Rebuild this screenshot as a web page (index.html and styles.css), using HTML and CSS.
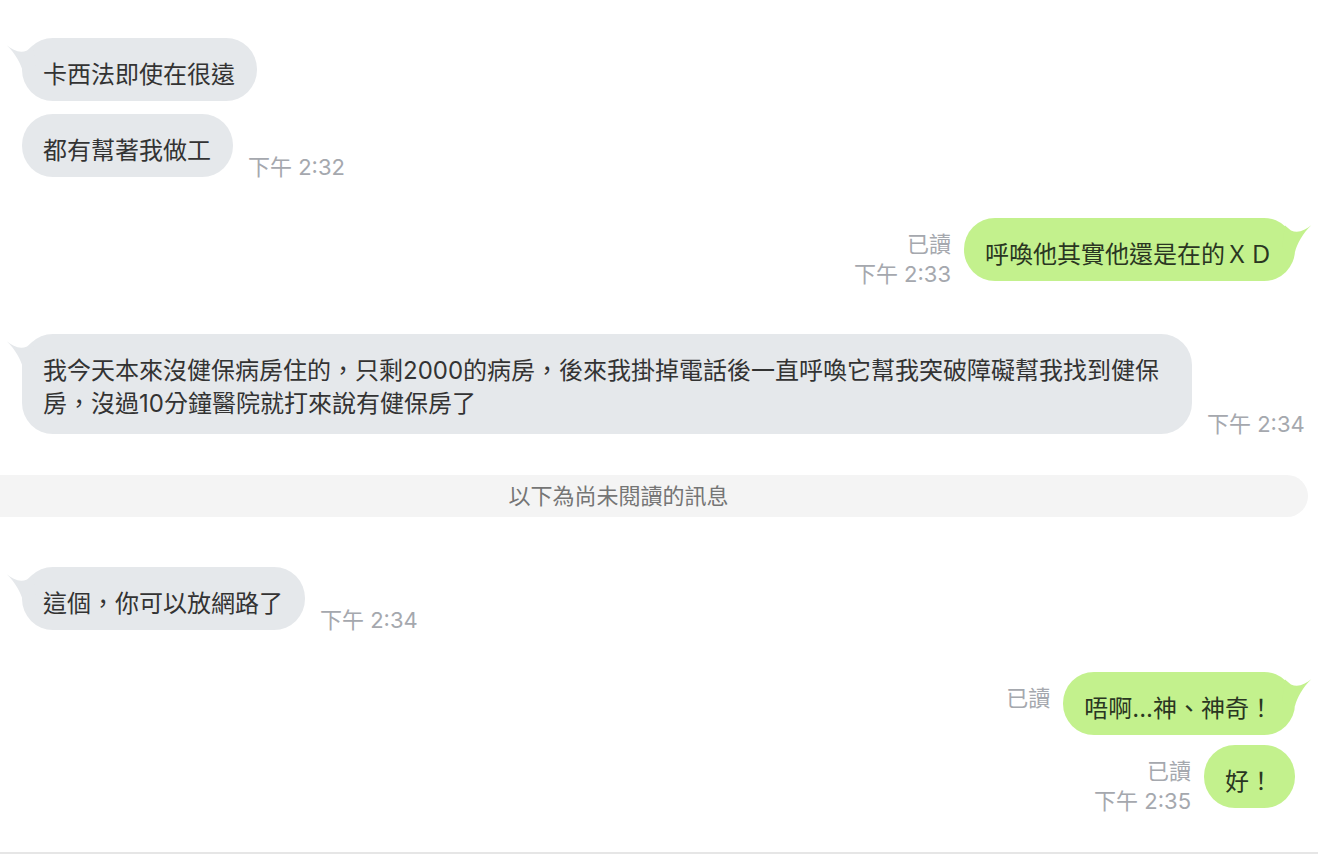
FILE: index.html
```html
<!DOCTYPE html>
<html>
<head>
  <meta charset="UTF-8">
  <title>Chat</title>
  <link rel="stylesheet" href="styles.css">
</head>
<body>
  <main class="chat">
    <!-- incoming group -->
    <div class="row in first">
      <div class="bubble gray">
        <svg class="tail" width="40" height="34" viewBox="0 0 40 34"><path d="M0.7 7.3 C7 12.5 14 15.5 21 12.5 L27 7.5 L30 30 L17 34 C15 26 9 15 0.7 7.3 Z"/></svg>
        卡西法即使在很遠
      </div>
    </div>
    <div class="row in tight">
      <div class="bubble gray">都有幫著我做工</div>
      <div class="meta">下午 2:32</div>
    </div>

    <!-- outgoing -->
    <div class="row out gap-a">
      <div class="meta"><div>已讀</div><div>下午 2:33</div></div>
      <div class="bubble green">
        <svg class="tail" width="40" height="34" viewBox="0 0 40 34"><path d="M0.7 7.3 C7 12.5 14 15.5 21 12.5 L27 7.5 L30 30 L17 34 C15 26 9 15 0.7 7.3 Z"/></svg>
        呼喚他其實他還是在的ＸＤ
      </div>
    </div>

    <div class="row in gap-b">
      <div class="bubble gray long">
        <svg class="tail" width="40" height="34" viewBox="0 0 40 34"><path d="M0.7 7.3 C7 12.5 14 15.5 21 12.5 L27 7.5 L30 30 L17 34 C15 26 9 15 0.7 7.3 Z"/></svg>
        我今天本來沒健保病房住的，只剩2000的病房，後來我掛掉電話後一直呼喚它幫我突破障礙幫我找到健保房，沒過10分鐘醫院就打來說有健保房了
      </div>
      <div class="meta">下午 2:34</div>
    </div>

    <div class="divider">以下為尚未閱讀的訊息</div>

    <div class="row in gap-c">
      <div class="bubble gray">
        <svg class="tail" width="40" height="34" viewBox="0 0 40 34"><path d="M0.7 7.3 C7 12.5 14 15.5 21 12.5 L27 7.5 L30 30 L17 34 C15 26 9 15 0.7 7.3 Z"/></svg>
        這個，你可以放網路了
      </div>
      <div class="meta">下午 2:34</div>
    </div>

    <div class="row out gap-d">
      <div class="meta"><div>已讀</div></div>
      <div class="bubble green">
        <svg class="tail" width="40" height="34" viewBox="0 0 40 34"><path d="M0.7 7.3 C7 12.5 14 15.5 21 12.5 L27 7.5 L30 30 L17 34 C15 26 9 15 0.7 7.3 Z"/></svg>
        唔啊...神、神奇！
      </div>
    </div>
    <div class="row out tight">
      <div class="meta"><div>已讀</div><div>下午 2:35</div></div>
      <div class="bubble green">好！</div>
    </div>
  </main>
  <footer class="composer"></footer>
</body>
</html>
```

FILE: styles.css
```css
html, body {
  height: 100%;
}
body {
  margin: 0;
  display: flex;
  flex-direction: column;
  background: #fff;
  font-family: Inter, "Noto Sans CJK TC", sans-serif;
  overflow: hidden;
}
.chat {
  flex: 1;
  padding-top: 38px;
}
/* message rows */
.row {
  display: flex;
  padding: 0 23px 0 22px;
}
.row.in {
  align-items: flex-end;
  gap: 15px;
}
.row.out {
  justify-content: flex-end;
  align-items: flex-start;
  gap: 13px;
}
.row.tight { margin-top: 13px; }
.row.out.tight { margin-top: 10px; }
.row.gap-a { margin-top: 41px; }
.row.gap-b { margin-top: 53px; }
.row.gap-c { margin-top: 50px; }
.row.gap-d { margin-top: 42px; }

.bubble {
  position: relative;
  flex-shrink: 0;
  padding: 20px 22px 10px 21px;
  border-radius: 31px;
  font-size: 24px;
  line-height: 33px;
  white-space: nowrap;
}
.bubble.long {
  white-space: normal;
  max-width: 1170px;
  box-sizing: border-box;
  padding-bottom: 14px;
}
.bubble.gray {
  background: #e5e8eb;
  color: #333;
}
.bubble.green {
  background: #c3f18d;
  color: #2a3622;
}
/* speech tails */
.tail {
  position: absolute;
  top: 0;
  left: -16px;
}
.gray .tail { fill: #e5e8eb; }
.green .tail {
  fill: #c3f18d;
  left: auto;
  right: -17px;
  transform: scaleX(-1);
}

.meta {
  font-size: 22px;
  line-height: 30px;
  color: #a5a8ae;
  white-space: nowrap;
}
.row.in .meta {
  margin-bottom: -5px;
}
.row.out .meta {
  text-align: right;
  margin-top: 11px;
  margin-bottom: -30px;
}

/* unread divider */
.divider {
  margin: 41px 10px 0 -71px;
  height: 42px;
  line-height: 42px;
  border-radius: 21px;
  background: #f4f4f4;
  color: #757575;
  font-size: 22px;
  text-align: center;
}

.composer {
  border-top: 2px solid #e6e6e6;
}
```
